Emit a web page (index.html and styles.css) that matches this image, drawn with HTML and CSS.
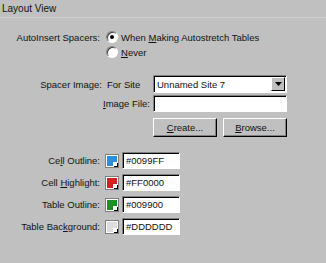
FILE: index.html
```html
<!DOCTYPE html>
<html lang="en">
<head>
    <meta charset="UTF-8">
    <title>Layout View</title>
    <link rel="stylesheet" href="styles.css">
</head>
<body>
    <div class="panel">
        <div class="title">Layout View</div>
        <div class="sep"></div>

        <div class="row row-auto">
            <span class="label label-auto">AutoInsert Spacers:</span>
            <span class="radio checked"></span>
            <span class="radio-text">When <u>M</u>aking Autostretch Tables</span>
        </div>
        <div class="row row-never">
            <span class="radio"></span>
            <span class="radio-text"><u>N</u>ever</span>
        </div>

        <div class="row row-spacer">
            <span class="label label-spacer">Spacer Image:</span>
            <span class="for-site">For Site</span>
            <div class="select">
                <span class="select-text">Unnamed Site 7</span>
                <span class="select-btn">
                    <svg width="7" height="4" viewBox="0 0 7 4"><path d="M0 0h7L3.5 4z" fill="#000"/></svg>
                </span>
            </div>
        </div>

        <div class="row row-image">
            <span class="label label-image"><u>I</u>mage File:</span>
            <div class="field field-image"></div>
        </div>

        <div class="row row-buttons">
            <button class="btn"><u>C</u>reate...</button>
            <button class="btn"><u>B</u>rowse...</button>
        </div>

        <div class="row row-color first">
            <span class="label label-color">Ce<u>l</u>l Outline:</span>
            <span class="swatch"><span class="swatch-fill blue"></span></span>
            <div class="field field-color">#0099FF</div>
        </div>
        <div class="row row-color">
            <span class="label label-color">Cell <u>H</u>ighlight:</span>
            <span class="swatch"><span class="swatch-fill red"></span></span>
            <div class="field field-color">#FF0000</div>
        </div>
        <div class="row row-color">
            <span class="label label-color">Table Outline:</span>
            <span class="swatch"><span class="swatch-fill green"></span></span>
            <div class="field field-color">#009900</div>
        </div>
        <div class="row row-color">
            <span class="label label-color">Table Bac<u>k</u>ground:</span>
            <span class="swatch"><span class="swatch-fill gray"></span></span>
            <div class="field field-color">#DDDDDD</div>
        </div>
    </div>
</body>
</html>
```

FILE: styles.css
```css
body {
    margin: 0;
    background-color: #c0c0c0;
    font-family: 'Liberation Sans', Arial, sans-serif;
    font-size: 9.5px;
    color: #111;
}
.panel {
    height: 263px;
}
.title {
    padding: 3px 0 0 2px;
    height: 14px;
    line-height: 11px;
    font-size: 10px;
}
.sep {
    border-top: 1px solid #cdcdcd;
}
.row {
    display: flex;
    align-items: center;
}
.label {
    text-align: right;
    flex-shrink: 0;
}

/* Abstandshalter */
.row-auto {
    margin-top: 12px;
    height: 14px;
}
.label-auto {
    width: 100px;
    margin-right: 6px;
}
.radio {
    width: 12px;
    height: 12px;
    box-sizing: border-box;
    border-radius: 50%;
    background: #fff;
    border: 1px solid;
    border-color: #808080 #fff #fff #808080;
    box-shadow: inset 1px 1px 0 #404040;
    position: relative;
    flex-shrink: 0;
}
.radio.checked::after {
    content: '';
    position: absolute;
    left: 3px;
    top: 3px;
    width: 4px;
    height: 4px;
    border-radius: 50%;
    background: #000;
}
.radio-text {
    margin-left: 3px;
}
.row-never {
    margin-top: 1px;
    height: 14px;
    padding-left: 106px;
}

.row-spacer {
    margin-top: 16px;
    height: 18px;
}
.label-spacer {
    width: 102px;
}
.for-site {
    margin-left: 5px;
    width: 46px;
}
.select {
    width: 134px;
    height: 18px;
    box-sizing: border-box;
    background: #fff;
    border: 1px solid;
    border-color: #808080 #fff #fff #808080;
    box-shadow: inset 1px 1px 0 #000;
    display: flex;
    align-items: center;
    justify-content: space-between;
}
.select-text {
    padding-left: 3px;
}
.select-btn {
    width: 14px;
    height: 14px;
    margin-right: 1px;
    box-sizing: border-box;
    background: #c0c0c0;
    border: 1px solid;
    border-color: #fff #000 #000 #fff;
    display: flex;
    align-items: center;
    justify-content: center;
}

.row-image {
    margin-top: 2px;
    height: 17px;
}
.label-image {
    width: 150px;
    margin-right: 3px;
}
.field {
    box-sizing: border-box;
    background: #fff;
    border: 1px solid;
    border-color: #808080 #fff #fff #808080;
    box-shadow: inset 1px 1px 0 #000;
}
.field-image {
    width: 134px;
    height: 17px;
}

.row-buttons {
    margin-top: 6px;
    padding-left: 153px;
    gap: 6px;
    height: 19px;
}
.btn {
    width: 64px;
    height: 19px;
    padding: 0;
    background: #c0c0c0;
    font: inherit;
    color: #111;
    border: 1px solid;
    border-color: #fff #000 #000 #fff;
    box-shadow: inset -1px -1px 0 #808080;
}

.row-color {
    margin-top: 5px;
    height: 17px;
}
.row-color.first {
    margin-top: 15px;
}
.label-color {
    width: 100px;
    margin-right: 5px;
}
.swatch {
    width: 14px;
    height: 14px;
    box-sizing: border-box;
    border: 1px solid #808080;
    background: #fff;
    padding: 1px;
    position: relative;
    flex-shrink: 0;
}
.swatch-fill {
    display: block;
    width: 100%;
    height: 100%;
}
/* kleines Dreieck unten rechts */
.swatch::after {
    content: '';
    position: absolute;
    right: 0;
    bottom: 0;
    width: 4px;
    height: 4px;
    background: #fff;
    border-top: 1px solid #fff;
    border-left: 1px solid #fff;
    box-shadow: inset -2px -2px 0 -1px #000;
}
.blue { background: #2a8fe0; }
.red { background: #d42020; }
.green { background: #209020; }
.gray { background: #dddddd; }
.field-color {
    margin-left: 3px;
    width: 58px;
    height: 17px;
    padding-left: 3px;
    line-height: 15px;
}
```
